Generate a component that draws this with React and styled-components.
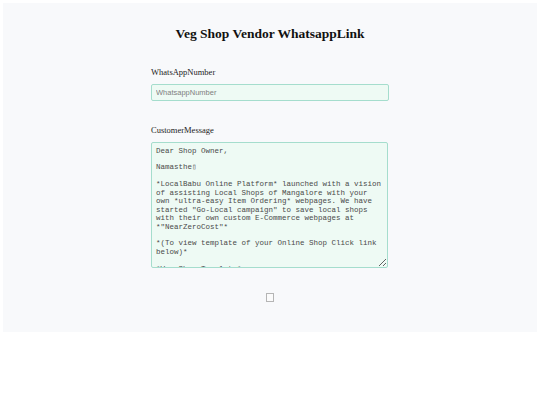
import React from "react";
import styled, { createGlobalStyle } from "styled-components";

const Global = createGlobalStyle`
  html, body { margin: 0; padding: 0; background: #ffffff; }
  * { box-sizing: border-box; }
`;

const Panel = styled.main`
  margin: 3px;
  width: 534px;
  background: #f8f9fb;
  padding: 23px 0 30px;
  display: flex;
  flex-direction: column;
  align-items: center;
`;

const Title = styled.h1`
  margin: 0;
  font-family: "Liberation Serif", "Times New Roman", serif;
  font-weight: bold;
  font-size: 13.5px;
  line-height: 16px;
  color: #111;
`;

const Form = styled.form`
  width: 238px;
  display: flex;
  flex-direction: column;
`;

const Label = styled.label`
  margin-top: ${(p) => p.$top}px;
  margin-bottom: 7px;
  font-family: "Liberation Serif", "Times New Roman", serif;
  font-size: 8.5px;
  line-height: 10px;
  color: #222;
`;

const Input = styled.input`
  width: 100%;
  height: 17px;
  margin: 0;
  padding: 0 4px;
  border: 1px solid #a5ddcd;
  border-radius: 2px;
  background: #eefaf4;
  font-family: "Liberation Sans", Arial, sans-serif;
  font-size: 7.5px;
  color: #333;
  outline: none;
  &::placeholder { color: #7f7f7f; }
`;

const TextArea = styled.textarea`
  width: 237px;
  height: 126px;
  margin: 0;
  padding: 3.5px 4px;
  border: 1px solid #a5ddcd;
  border-radius: 2px;
  background: #eefaf4;
  font-family: "Liberation Mono", "Courier New", monospace;
  font-size: 7.5px;
  line-height: 8.45px;
  color: #4a4a4a;
  overflow: hidden;
  outline: none;
`;

const Send = styled.span`
  margin-top: 25px;
  width: 8px;
  height: 9px;
  border: 1px solid #b5b5b5;
  background: #fbfbfb;
`;

const message = `Dear Shop Owner,

Namasthe\u25AF

*LocalBabu Online Platform* launched with a vision of assisting Local Shops of Mangalore with your own *ultra-easy Item Ordering* webpages. We have started "Go-Local campaign" to save local shops with their own custom E-Commerce webpages at *"NearZeroCost"*

*(To view template of your Online Shop Click link below)*

*Veg Shop Template*
https://localbabu.com/vegshop`;

export default function App() {
  return (
    <>
      <Global />
      <Panel>
        <Title>Veg Shop Vendor WhatsappLink</Title>
        <Form onSubmit={(e) => e.preventDefault()}>
          <Label $top={25} htmlFor="num">WhatsAppNumber</Label>
          <Input id="num" placeholder="WhatsappNumber" />
          <Label $top={24} htmlFor="msg">CustomerMessage</Label>
          <TextArea id="msg" defaultValue={message} />
        </Form>
        <Send />
      </Panel>
    </>
  );
}
